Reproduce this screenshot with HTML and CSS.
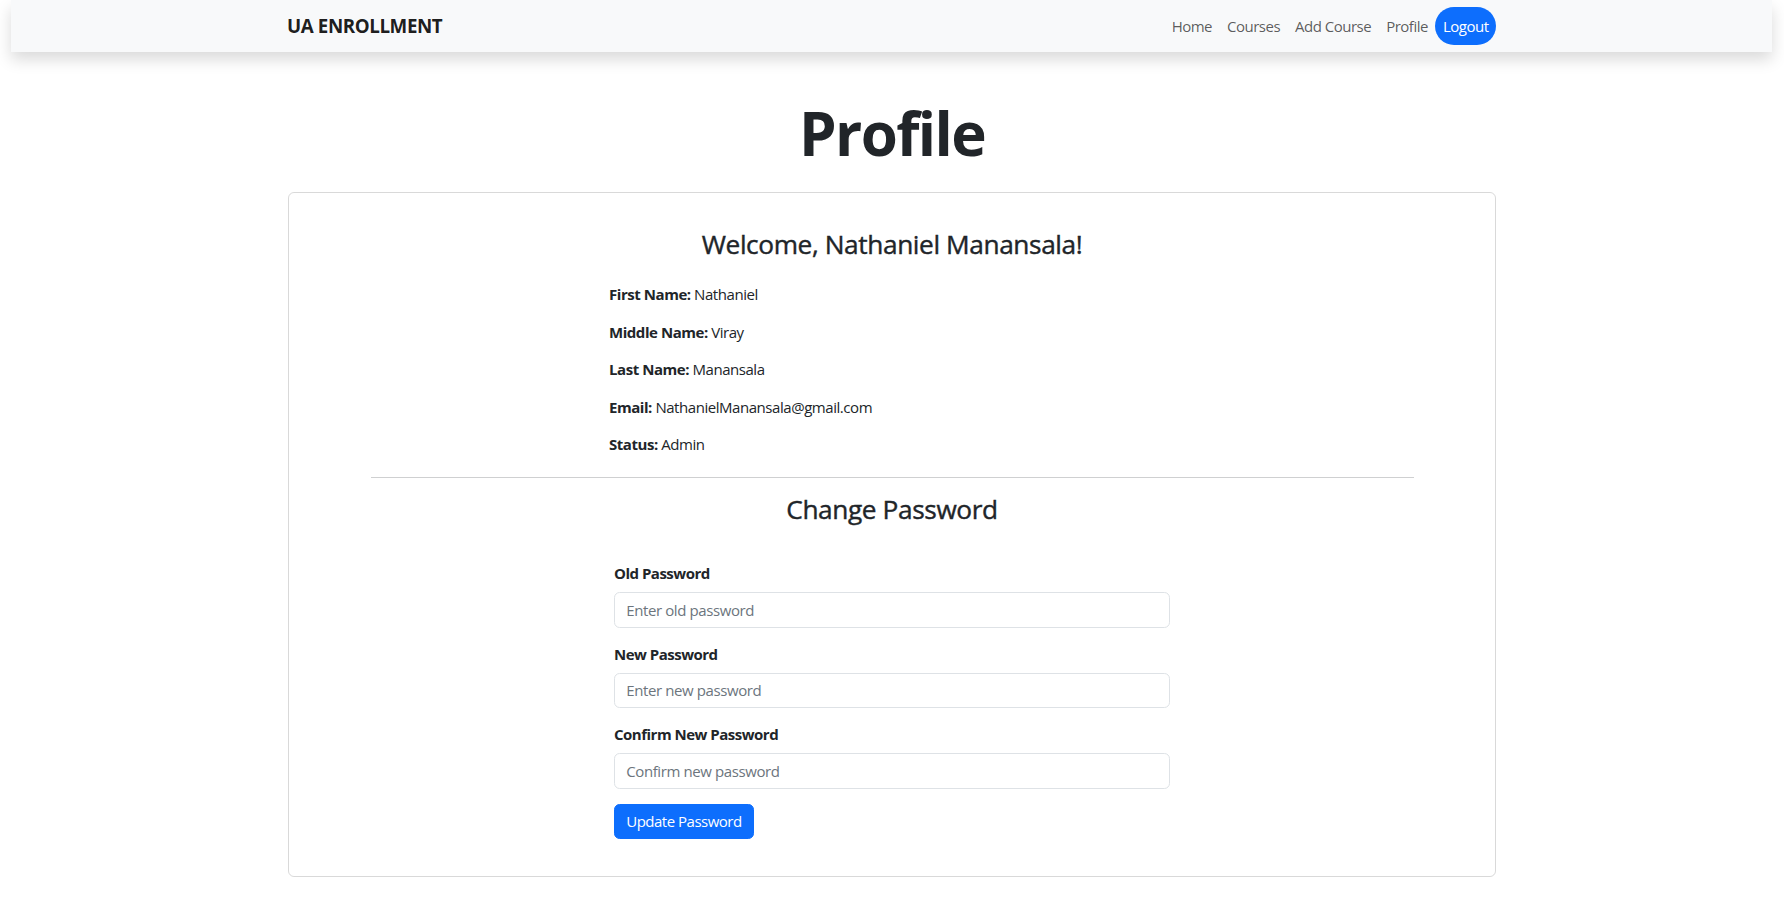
FILE: index.html
```html
<!DOCTYPE html>
<html lang="en">
<head>
<meta charset="utf-8">
<title>Profile - UA Enrollment</title>
<link rel="stylesheet" href="styles.css">
</head>
<body>
<nav class="navbar">
  <div class="nav-inner">
    <a class="brand" href="#">UA ENROLLMENT</a>
    <ul class="nav-links">
      <li><a class="nav-link" href="#">Home</a></li>
      <li><a class="nav-link" href="#">Courses</a></li>
      <li><a class="nav-link" href="#">Add Course</a></li>
      <li><a class="nav-link" href="#">Profile</a></li>
      <li><a class="nav-link logout" href="#">Logout</a></li>
    </ul>
  </div>
</nav>

<main class="page">
  <h1 class="page-title">Profile</h1>
  <section class="card">
    <h3 class="welcome">Welcome, Nathaniel Manansala!</h3>
    <div class="info">
      <p><strong>First Name:</strong> Nathaniel</p>
      <p><strong>Middle Name:</strong> Viray</p>
      <p><strong>Last Name:</strong> Manansala</p>
      <p><strong>Email:</strong> NathanielManansala@gmail.com</p>
      <p><strong>Status:</strong> Admin</p>
    </div>
    <hr class="divider">
    <h3 class="section-title">Change Password</h3>
    <form class="pw-form">
      <div class="field">
        <label for="old">Old Password</label>
        <input id="old" type="password" placeholder="Enter old password">
      </div>
      <div class="field">
        <label for="new">New Password</label>
        <input id="new" type="password" placeholder="Enter new password">
      </div>
      <div class="field">
        <label for="confirm">Confirm New Password</label>
        <input id="confirm" type="password" placeholder="Confirm new password">
      </div>
      <button type="button" class="btn-primary">Update Password</button>
    </form>
  </section>
</main>
</body>
</html>
```
FILE: styles.css
```css
* { box-sizing: border-box; }
html, body { margin: 0; padding: 0; background: #fff; }
body {
  font-family: "Open Sans", "Noto Sans", sans-serif;
  font-size: 15px;
  line-height: 1.5;
  color: #212529;
}

.navbar {
  margin: 0 12px 0 11px;
  height: 52px;
  background: #f8f9fa;
  box-shadow: 0 7.5px 15px rgba(0, 0, 0, 0.15);
  position: relative;
  z-index: 1;
}
.nav-inner {
  width: 1209px;
  height: 100%;
  margin: 0 auto;
  display: flex;
  align-items: center;
  justify-content: space-between;
}
.brand {
  font-size: 18.75px;
  font-weight: 700;
  color: rgba(0, 0, 0, 0.9);
  text-decoration: none;
  line-height: 1.5;
  letter-spacing: -0.4px;
}
.nav-links {
  list-style: none;
  margin: 0;
  padding: 0;
  display: flex;
  align-items: center;
}
.nav-link {
  display: block;
  padding: 7.5px 7.5px;
  line-height: 22.5px;
  font-size: 15px;
  color: rgba(0, 0, 0, 0.65);
  text-decoration: none;
  letter-spacing: -0.5px;
}
.logout {
  background: #0d6efd;
  color: #fff;
  border-radius: 50rem;
  padding: 7.5px 7.5px;
}

.page {
  width: 1208px;
  margin: 0 auto;
  padding-bottom: 23px;
}
.page-title {
  margin: 45px 0 23px;
  text-align: center;
  font-size: 60px;
  line-height: 72px;
  font-weight: 700;
  letter-spacing: -1.6px;
}

.card {
  border: 1px solid rgba(0, 0, 0, 0.15);
  border-radius: 6px;
  padding: 36px 0 37px;
  display: flex;
  flex-direction: column;
  align-items: center;
}
.welcome, .section-title {
  margin: 0;
  font-size: 26.25px;
  line-height: 31.5px;
  font-weight: 400;
  text-align: center;
  letter-spacing: -0.4px;
  -webkit-text-stroke: 0.4px currentColor;
}
.welcome { margin-bottom: 22.5px; }

.info {
  width: 566px;
  display: flex;
  flex-direction: column;
  letter-spacing: -0.45px;
}
.info p {
  margin: 0 0 15px;
  line-height: 22.5px;
}
.info strong { font-weight: 700; }

.divider {
  width: 1043px;
  margin: 6px 0 16.5px;
  border: 0;
  border-top: 1px solid #cfd0d1;
  height: 0;
}

.section-title { margin-bottom: 36.5px; }

.pw-form {
  width: 556px;
  display: flex;
  flex-direction: column;
  align-items: flex-start;
}
.field {
  width: 100%;
  display: flex;
  flex-direction: column;
  margin-bottom: 15px;
}
.field label {
  font-weight: 700;
  line-height: 22.5px;
  margin-bottom: 7.5px;
  letter-spacing: -0.5px;
}
.field input {
  width: 100%;
  height: 35.5px;
  padding: 5.6px 11.25px;
  font-family: inherit;
  font-size: 15px;
  line-height: 22.5px;
  color: #212529;
  border: 1px solid #dee2e6;
  border-radius: 5.6px;
  background: #fff;
  letter-spacing: -0.4px;
}
.field input::placeholder { color: #6c757d; opacity: 1; }

.btn-primary {
  height: 35.75px;
  padding: 5.6px 11.25px;
  font-family: inherit;
  font-size: 15px;
  line-height: 22.5px;
  color: #fff;
  background: #0d6efd;
  border: 1px solid #0d6efd;
  border-radius: 5.6px;
  letter-spacing: -0.5px;
  cursor: pointer;
}
```
